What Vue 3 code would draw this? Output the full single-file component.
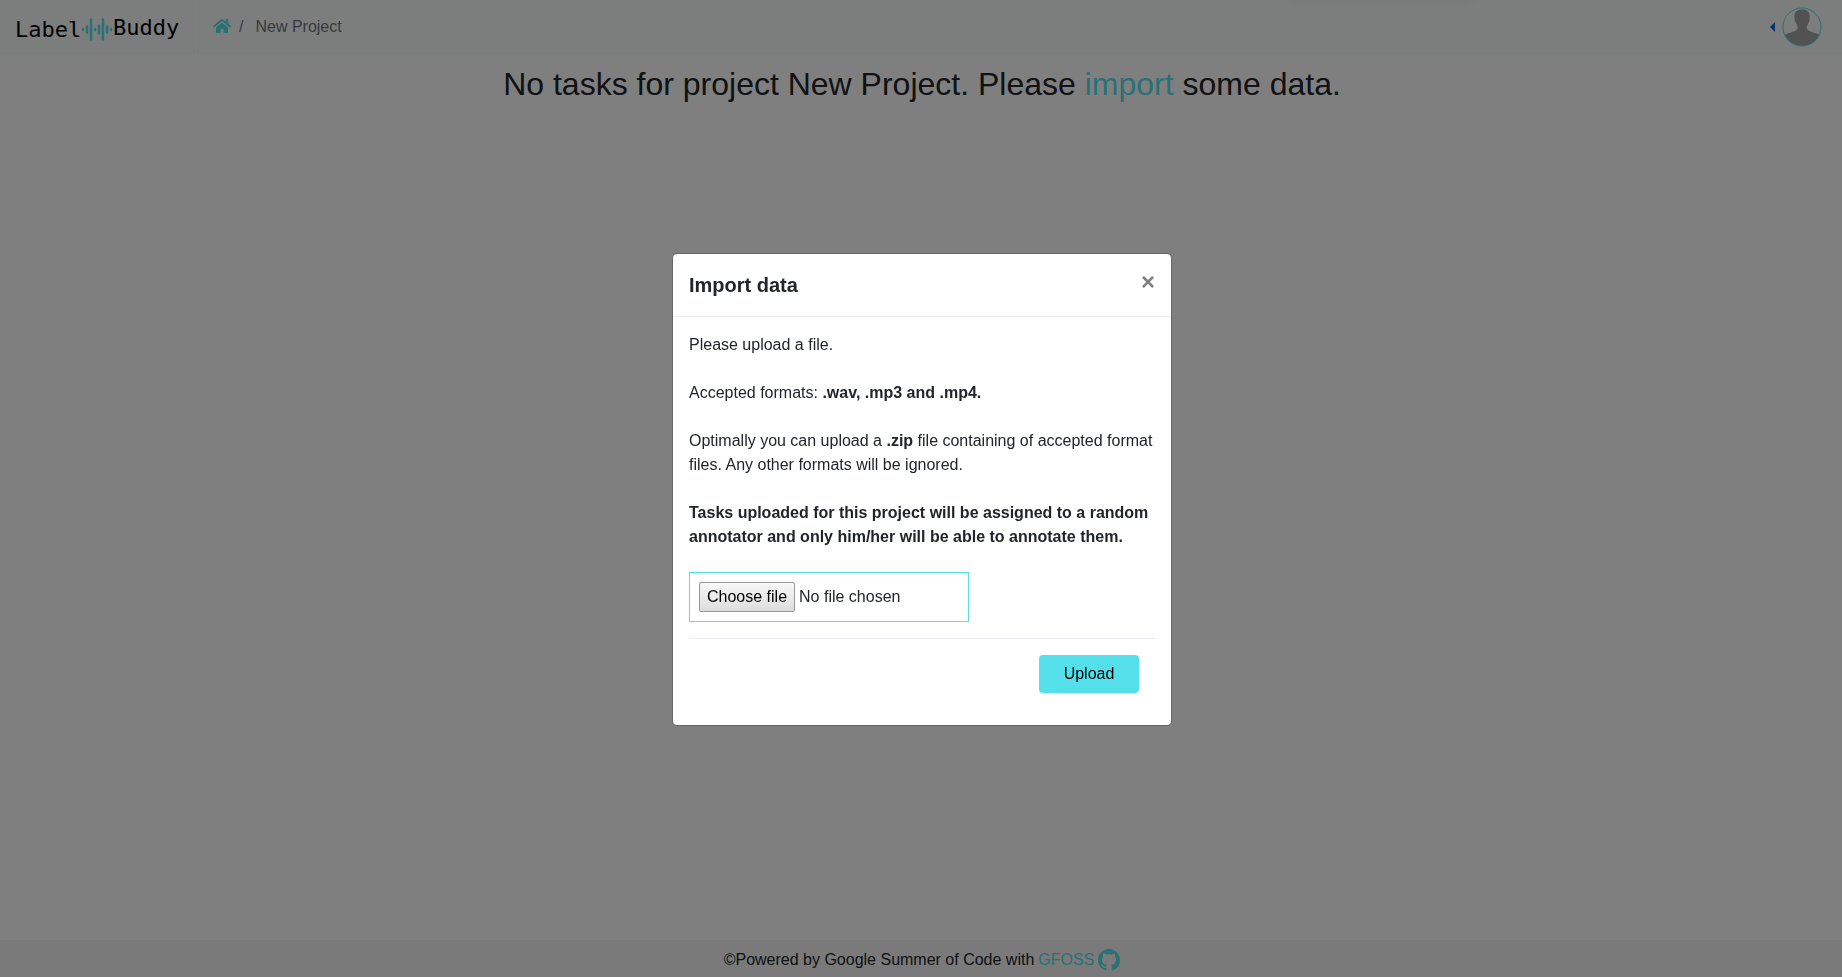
<script setup>
import { ref } from 'vue'

const open = ref(true)
const fileName = ref('No file chosen')

function pick(event) {
  const file = event.target.files[0]
  fileName.value = file ? file.name : 'No file chosen'
}
</script>

<template>
  <div class="page">
    <header class="topbar">
      <a class="brand" href="#" aria-label="LabelBuddy">
        <svg class="logo" viewBox="0 0 168 34" width="168" height="34">
          <text x="0" y="26">Label</text>
          <g stroke-width="2.500" stroke-linecap="round">
            <path d="M68 18v1M72 15.500v6M80 18v1M84 14.500v8M92 15.500v6M96 18v1" />
            <path d="M76 8.500v20M88 8.500v20" />
          </g>
          <text x="98" y="24">Buddy</text>
        </svg>
      </a>
      <nav class="crumbs" aria-label="Breadcrumb">
        <a class="home" href="#" aria-label="Home">
          <svg viewBox="0 0 576 512" width="18" height="16">
            <path d="M280.37 148.26L96 300.11V464a16 16 0 0 0 16 16l112.06-.29a16 16 0 0 0 15.92-16V368a16 16 0 0 1 16-16h64a16 16 0 0 1 16 16v95.64a16 16 0 0 0 16 16.05L464 480a16 16 0 0 0 16-16V300L295.67 148.26a12.19 12.19 0 0 0-15.3 0zM571.6 251.47L488 182.56V44.05a12 12 0 0 0-12-12h-56a12 12 0 0 0-12 12v72.61L318.47 43a48 48 0 0 0-61 0L4.34 251.47a12 12 0 0 0-1.6 16.9l25.5 31A12 12 0 0 0 45.15 301l235.22-193.74a12.19 12.19 0 0 1 15.3 0L530.9 301a12 12 0 0 0 16.9-1.6l25.5-31a12 12 0 0 0-1.7-16.93z" />
          </svg>
        </a>
        <span class="slash">/</span>
        <span class="current">New Project</span>
      </nav>
      <button class="user" type="button" aria-label="User menu">
        <svg class="caret" viewBox="0 0 5 10" width="5" height="10"><path d="M5 0v10L0 5z" /></svg>
        <svg class="avatar" viewBox="0 0 40 40" width="40" height="40">
          <defs>
            <clipPath id="avatar-clip"><circle cx="20" cy="20" r="19" /></clipPath>
          </defs>
          <path
            clip-path="url(#avatar-clip)"
            d="M20 2.500C15 2.500 12.500 5 12.500 9C12.200 12 13 14.500 14.500 17C15.500 18.500 15.800 20 15.500 21.500C15 24.500 7 25.500 1 28.500V40H39V28.500C33 25.500 25.500 24.500 24.800 21.500C24.500 20 25 18.500 26 17C27.300 14.500 28 12 27.700 9C27.700 5 25 2.500 20 2.500Z"
          />
          <circle class="ring" cx="20" cy="20" r="19" />
        </svg>
      </button>
      <span class="top-shadow"></span>
    </header>

    <main class="content">
      <h2>No tasks for project New Project. Please <a href="#" @click.prevent="open = true">import</a> some data.</h2>
    </main>

    <footer class="footer">
      <span>©Powered by Google Summer of Code with</span>
      <a href="#">GFOSS</a>
      <a class="github" href="#" aria-label="GitHub">
        <svg viewBox="0 0 16 16" width="22" height="22">
          <path d="M8 0C3.580 0 0 3.580 0 8c0 3.540 2.290 6.530 5.470 7.590.4.070.55-.17.55-.38 0-.19-.01-.82-.01-1.490-2.010.37-2.530-.49-2.690-.94-.09-.23-.48-.94-.82-1.130-.28-.15-.68-.52-.01-.53.63-.01 1.080.58 1.230.82.72 1.210 1.870.87 2.330.66.07-.52.28-.87.51-1.070-1.780-.2-3.640-.89-3.640-3.950 0-.87.31-1.590.82-2.150-.08-.2-.36-1.020.08-2.120 0 0 .67-.21 2.200.82.64-.18 1.320-.27 2-.27s1.360.09 2 .27c1.530-1.040 2.200-.82 2.200-.82.44 1.100.16 1.920.08 2.120.51.56.82 1.270.82 2.150 0 3.070-1.870 3.750-3.650 3.950.29.25.54.73.54 1.480 0 1.070-.01 1.930-.01 2.200 0 .21.15.46.55.38A8.010 8.010 0 0 0 16 8c0-4.420-3.580-8-8-8z" />
        </svg>
      </a>
    </footer>

    <div v-if="open" class="backdrop">
      <section class="modal" role="dialog" aria-modal="true" aria-labelledby="modal-title">
        <div class="modal-header">
          <h5 id="modal-title">Import data</h5>
          <button class="close" type="button" aria-label="Close" @click="open = false">×</button>
        </div>
        <form class="modal-body" @submit.prevent>
          <p>Please upload a file.</p>
          <p>Accepted formats: <b>.wav, .mp3 and .mp4.</b></p>
          <p>Optimally you can upload a <b>.zip</b> file containing of accepted format files. Any other formats will be ignored.</p>
          <p class="notice">Tasks uploaded for this project will be assigned to a random annotator and only him/her will be able to annotate them.</p>
          <label class="file" for="data-file">
            <input id="data-file" type="file" @change="pick" />
            <span class="choose">Choose file</span>
            <span>{{ fileName }}</span>
          </label>
          <div class="modal-footer">
            <button class="upload" type="submit">Upload</button>
          </div>
        </form>
      </section>
    </div>
  </div>
</template>

<style>
body {
  margin: 0;
}
</style>

<style scoped>
.page,
.page * {
  box-sizing: border-box;
}

.page {
  display: flex;
  flex-direction: column;
  min-height: 100vh;
  background: #fff;
  color: #212529;
  font-family: "Liberation Sans", Arial, sans-serif;
  font-size: 16px;
  line-height: 24px;
}

a {
  color: #54e0eb;
  text-decoration: none;
}

button {
  font: inherit;
  border: 0;
  cursor: pointer;
}

svg {
  display: block;
}

.topbar {
  position: relative;
  display: flex;
  align-items: stretch;
  height: 55px;
  background: #f7fdfb;
  overflow: hidden;
}

.brand {
  display: flex;
  align-items: center;
  padding: 0 12px 0 15px;
  border-right: 2px solid #fff;
}

.logo text {
  fill: #000;
  font-family: "DejaVu Sans Mono", monospace;
  font-size: 22px;
}

.logo g {
  fill: none;
  stroke: #54e0eb;
}

.crumbs {
  display: flex;
  align-items: center;
  padding: 0 16px 2px;
  color: #6c757d;
}

.home {
  padding-bottom: 2px;
}

.home svg,
.github svg {
  fill: #54e0eb;
}

.slash {
  padding: 0 12px 0 8px;
}

.user {
  display: flex;
  align-items: center;
  gap: 7px;
  margin-left: auto;
  padding: 0 20px 1px 0;
  background: none;
}

.caret {
  fill: #0a6ad8;
}

.avatar {
  fill: #a4a4a4;
}

.ring {
  fill: none;
  stroke: #54e0eb;
}

.top-shadow {
  position: absolute;
  top: -12px;
  left: 70%;
  width: 10%;
  height: 8px;
  border-radius: 4px;
  box-shadow: 0 0 16px rgba(0, 0, 0, 0.15);
}

.content {
  flex: 1;
  padding: 10px 0 0 2px;
  text-align: center;
}

h2 {
  margin: 0;
  font-size: 32px;
  font-weight: 400;
  line-height: 38px;
}

.footer {
  display: flex;
  align-items: center;
  justify-content: center;
  gap: 4px;
  height: 37px;
  padding: 2px 0 0 2px;
  background: #f5f5f5;
}

.backdrop {
  position: fixed;
  inset: 0;
  display: flex;
  align-items: center;
  justify-content: center;
  padding-top: 2px;
  padding-left: 2px;
  background: rgba(0, 0, 0, 0.5);
}

.modal {
  width: 500px;
  max-width: 100%;
  border: 1px solid rgba(0, 0, 0, 0.2);
  border-radius: 5px;
  background: #fff;
  background-clip: padding-box;
}

.modal-header {
  display: flex;
  align-items: flex-start;
  justify-content: space-between;
  padding: 16px;
  border-bottom: 1px solid #e9ecef;
}

h5 {
  margin: 0;
  font-size: 20px;
  font-weight: 700;
  line-height: 30px;
}

.close {
  padding: 0;
  background: none;
  color: #808080;
  font-size: 24px;
  font-weight: 700;
  line-height: 24px;
}

.modal-body {
  padding: 16px;
}

p {
  margin: 0 0 24px;
}

.notice {
  margin-bottom: 23px;
  font-weight: 700;
}

.file {
  position: relative;
  display: flex;
  align-items: center;
  gap: 4px;
  width: 280px;
  max-width: 100%;
  height: 50px;
  margin-bottom: 16px;
  padding: 0 9px;
  border: 1px solid #54e0eb;
}

.file input {
  position: absolute;
  width: 1px;
  height: 1px;
  overflow: hidden;
  opacity: 0;
}

.choose {
  padding: 2px 7px;
  border: 1px solid #999;
  border-radius: 2px;
  background: linear-gradient(#f8f8f8, #ddd);
  color: #000;
}

.modal-footer {
  display: flex;
  justify-content: flex-end;
  padding: 16px;
  border-top: 1px solid #e9ecef;
}

.upload {
  width: 100px;
  height: 38px;
  padding: 0;
  border-radius: 4px;
  background: #54e0eb;
  color: #000;
}
</style>
